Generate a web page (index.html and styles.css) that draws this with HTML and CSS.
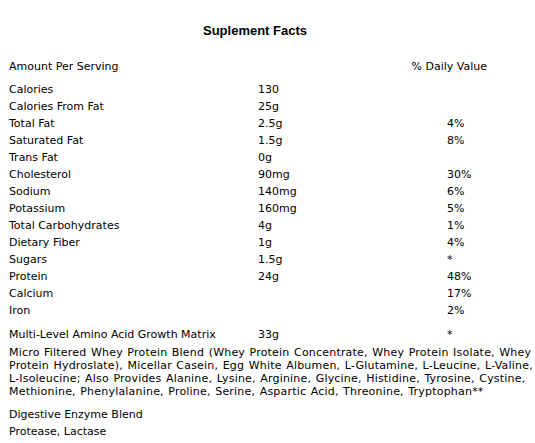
FILE: index.html
```
<!DOCTYPE html>
<html lang="en">
<head>
    <meta charset="UTF-8">
    <title>Suplement Facts</title>
    <link rel="stylesheet" href="styles.css">
</head>
<body>
    <div class="facts">
        <h1 class="facts-title">Suplement Facts</h1>

        <div class="facts-head">
            <span>Amount Per Serving</span>
            <span class="dv-head">% Daily Value</span>
        </div>

        <div class="facts-rows">
            <div class="row"><span>Calories</span><span>130</span><span></span></div>
            <div class="row"><span>Calories From Fat</span><span>25g</span><span></span></div>
            <div class="row"><span>Total Fat</span><span>2.5g</span><span>4%</span></div>
            <div class="row"><span>Saturated Fat</span><span>1.5g</span><span>8%</span></div>
            <div class="row"><span>Trans Fat</span><span>0g</span><span></span></div>
            <div class="row"><span>Cholesterol</span><span>90mg</span><span>30%</span></div>
            <div class="row"><span>Sodium</span><span>140mg</span><span>6%</span></div>
            <div class="row"><span>Potassium</span><span>160mg</span><span>5%</span></div>
            <div class="row"><span>Total Carbohydrates</span><span>4g</span><span>1%</span></div>
            <div class="row"><span>Dietary Fiber</span><span>1g</span><span>4%</span></div>
            <div class="row"><span>Sugars</span><span>1.5g</span><span>*</span></div>
            <div class="row"><span>Protein</span><span>24g</span><span>48%</span></div>
            <div class="row"><span>Calcium</span><span></span><span>17%</span></div>
            <div class="row"><span>Iron</span><span></span><span>2%</span></div>
        </div>

        <div class="blend">
            <div class="row"><span>Multi-Level Amino Acid Growth Matrix</span><span>33g</span><span>*</span></div>
            <p class="blend-text">Micro Filtered Whey Protein Blend (Whey Protein Concentrate, Whey Protein Isolate, Whey Protein Hydroslate), Micellar Casein, Egg White Albumen, <span class="nw">L-Glutamine,</span> <span class="nw">L-Leucine,</span> <span class="nw">L-Valine,</span> <span class="nw">L-Isoleucine;</span> Also Provides Alanine, Lysine, Arginine, Glycine, Histidine, Tyrosine, Cystine, Methionine, Phenylalanine, Proline, Serine, Aspartic Acid, Threonine, Tryptophan**</p>
        </div>

        <div class="enzyme">
            <div class="line">Digestive Enzyme Blend</div>
            <div class="line">Protease, Lactase</div>
        </div>
    </div>
</body>
</html>
```

FILE: styles.css
```
body {
    margin: 0;
    padding: 0;
    background-color: #fff;
    color: #000;
    font-family: 'DejaVu Sans', Verdana, sans-serif;
    font-size: 11px;
    line-height: 13px;
}

.facts {
    width: 524px;
    padding-left: 9px;
}

.facts-title {
    width: 492px;
    margin: 23px 0 19px;
    font-family: 'Liberation Sans', Arial, sans-serif;
    font-size: 13px;
    line-height: 16px;
    font-weight: bold;
    text-align: center;
}

.facts-head {
    display: flex;
    padding: 2px 0;
    margin-bottom: 6px;
}

.dv-head {
    margin-left: auto;
    margin-right: 46px;
}

.row {
    display: grid;
    grid-template-columns: 249px 189px 1fr;
    padding: 2px 0;
}

.blend {
    margin-top: 7px;
}

.blend-text {
    margin: 3px 0 0;
    letter-spacing: 0.2px;
    word-spacing: 0.8px;
}

.nw {
    white-space: nowrap;
}

.enzyme {
    margin-top: 8px;
}

.enzyme .line {
    padding: 2px 0;
}
```
